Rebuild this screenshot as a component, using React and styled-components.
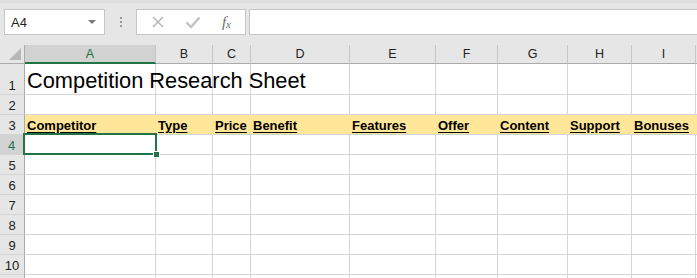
import styled, { createGlobalStyle } from 'styled-components'

const COLS = [
	{ key: 'A', width: 131 },
	{ key: 'B', width: 57 },
	{ key: 'C', width: 38 },
	{ key: 'D', width: 99 },
	{ key: 'E', width: 86 },
	{ key: 'F', width: 62 },
	{ key: 'G', width: 70 },
	{ key: 'H', width: 64 },
	{ key: 'I', width: 64 },
]

const HEADINGS = ['Competitor', 'Type', 'Price', 'Benefit', 'Features', 'Offer', 'Content', 'Support', 'Bonuses']

// row 11 only peeks in at the bottom edge, so its number stays hidden
const ROWS = [
	{ n: 1, height: 31 },
	{ n: 2, height: 20 },
	{ n: 3, height: 20 },
	{ n: 4, height: 20 },
	{ n: 5, height: 20 },
	{ n: 6, height: 20 },
	{ n: 7, height: 20 },
	{ n: 8, height: 20 },
	{ n: 9, height: 20 },
	{ n: 10, height: 20 },
	{ n: 11, height: 20, hidden: true },
]

const GREEN = '#217346'

function App() {
	const template = `25px ${COLS.map((c) => c.width + 'px').join(' ')} 1fr`

	return (
		<Page>
			<GlobalStyle />
			<FormulaBar>
				<NameBox>
					<span>A4</span>
					<Caret />
				</NameBox>
				<Grip>
					<i />
					<i />
					<i />
				</Grip>
				<Actions>
					<svg width="14" height="14" viewBox="0 0 14 14">
						<path d="M2 2 L12 12 M12 2 L2 12" stroke="#b9b9b9" strokeWidth="1.6" fill="none" />
					</svg>
					<svg width="16" height="14" viewBox="0 0 16 14">
						<path d="M1.5 7.5 L6 12 L14.5 2.5" stroke="#c2c2c2" strokeWidth="2.4" fill="none" />
					</svg>
					<Fx>
						f<sub>x</sub>
					</Fx>
				</Actions>
				<Input />
			</FormulaBar>

			<Sheet style={{ gridTemplateColumns: template }}>
				<Corner>
					<CornerMark />
				</Corner>
				{COLS.map((c) => (
					<ColHead key={c.key} $active={c.key === 'A'}>
						{c.key}
					</ColHead>
				))}
				<ColHead $rest />

				{ROWS.map((r) => (
					<Row key={r.n} r={r} />
				))}
			</Sheet>
		</Page>
	)
}

function Row({ r }) {
	const filled = r.n === 3
	return (
		<>
			<RowHead $h={r.height} $active={r.n === 4}>
				{r.hidden ? '' : r.n}
			</RowHead>
			{COLS.map((c, i) => (
				<Cell key={c.key} $h={r.height} $fill={filled}>
					{r.n === 1 && i === 0 && <Title>Competition Research Sheet</Title>}
					{filled && <Heading>{HEADINGS[i]}</Heading>}
					{r.n === 4 && i === 0 && (
						<Selection>
							<Handle />
						</Selection>
					)}
				</Cell>
			))}
			<Cell $h={r.height} $fill={filled} $rest />
		</>
	)
}

const GlobalStyle = createGlobalStyle`
	*, *::before, *::after {
		box-sizing: border-box;
	}
	body {
		margin: 0;
		background: #ffffff;
		font-family: "Liberation Sans", Arial, sans-serif;
		overflow: hidden;
	}
`

const Page = styled.div`
	width: 697px;
	height: 278px;
	overflow: hidden;
	background: #ffffff;
`

const FormulaBar = styled.div`
	height: 45px;
	background: #e6e6e6;
	border-top: 3px solid #dedede;
	display: flex;
	align-items: flex-start;
	padding: 6px 0 0 4px;
`

const NameBox = styled.div`
	width: 101px;
	height: 26px;
	background: #ffffff;
	border: 1px solid #c6c6c6;
	display: flex;
	align-items: center;
	justify-content: space-between;
	padding: 0 8px 0 6px;
	font-size: 13px;
	color: #222;
`

const Caret = styled.div`
	width: 0;
	height: 0;
	border-left: 4px solid transparent;
	border-right: 4px solid transparent;
	border-top: 4px solid #7a7a7a;
`

const Grip = styled.div`
	width: 31px;
	height: 26px;
	display: flex;
	flex-direction: column;
	align-items: center;
	justify-content: center;
	gap: 2px;

	i {
		width: 2px;
		height: 2px;
		background: #9a9a9a;
	}
`

const Actions = styled.div`
	width: 110px;
	height: 26px;
	background: #ffffff;
	border: 1px solid #c6c6c6;
	display: flex;
	align-items: center;
	justify-content: space-between;
	padding: 0 14px 0 14px;
`

const Fx = styled.span`
	font-family: "Liberation Serif", "Times New Roman", serif;
	font-style: italic;
	font-size: 15px;
	color: #6a6a6a;

	sub {
		font-size: 11px;
		vertical-align: -1px;
	}
`

const Input = styled.div`
	flex: 1;
	height: 26px;
	margin-left: 3px;
	background: #ffffff;
	border: 1px solid #c6c6c6;
	border-right: none;
`

const Sheet = styled.div`
	display: grid;
	font-family: "Liberation Sans", Arial, sans-serif;
`

const Corner = styled.div`
	height: 19px;
	background: #e6e6e6;
	border-right: 1px solid #ababab;
	border-bottom: 1px solid #ababab;
	display: flex;
	align-items: flex-end;
	justify-content: flex-end;
	padding: 0 3px 3px 0;
`

const CornerMark = styled.div`
	width: 0;
	height: 0;
	border-left: 12px solid transparent;
	border-bottom: 12px solid #b7b7b7;
`

const ColHead = styled.div`
	height: 19px;
	background: ${({ $active }) => ($active ? '#d2d2d2' : '#e6e6e6')};
	border-right: ${({ $rest }) => ($rest ? 'none' : '1px solid #c6c6c6')};
	border-bottom: ${({ $active }) => ($active ? `2px solid ${GREEN}` : '1px solid #ababab')};
	display: flex;
	align-items: center;
	justify-content: center;
	font-size: 12.5px;
	color: ${({ $active }) => ($active ? GREEN : '#222')};
`

const RowHead = styled.div`
	height: ${({ $h }) => $h}px;
	background: ${({ $active }) => ($active ? '#d2d2d2' : '#e6e6e6')};
	border-right: ${({ $active }) => ($active ? `2px solid ${GREEN}` : '1px solid #ababab')};
	border-bottom: 1px solid #d4d4d4;
	display: flex;
	align-items: flex-end;
	justify-content: center;
	font-size: 13px;
	line-height: 17px;
	color: ${({ $active }) => ($active ? GREEN : '#222')};
`

const Cell = styled.div`
	position: relative;
	height: ${({ $h }) => $h}px;
	background: ${({ $fill }) => ($fill ? '#ffe699' : 'transparent')};
	border-right: 1px solid ${({ $fill, $rest }) => ($fill || $rest ? 'transparent' : '#d4d4d4')};
	border-bottom: 1px solid #d4d4d4;
	display: flex;
	align-items: flex-end;
	padding-left: 2px;
	white-space: nowrap;
	min-width: 0;
`

const Title = styled.span`
	position: relative;
	z-index: 1;
	font-size: 21.8px;
	line-height: 26px;
	color: #000;
`

const Heading = styled.span`
	font-size: 13px;
	font-weight: bold;
	text-decoration: underline;
	text-underline-offset: 2px;
	line-height: 17px;
	color: #000;
`

const Selection = styled.div`
	position: absolute;
	left: -2px;
	top: -2px;
	right: -2px;
	bottom: -1px;
	border: 2px solid ${GREEN};
	z-index: 2;
`

const Handle = styled.div`
	position: absolute;
	right: -5px;
	bottom: -5px;
	width: 7px;
	height: 7px;
	background: ${GREEN};
	border: 1px solid #ffffff;
`

export default App
